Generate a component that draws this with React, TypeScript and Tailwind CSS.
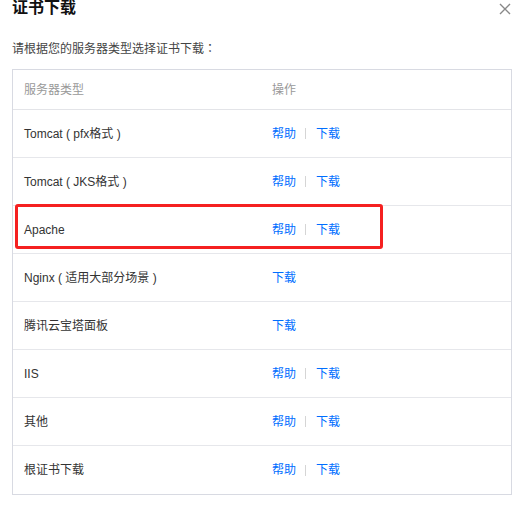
import React from "react";

const P = ({ c }: { c: string }) => (
  <span style={{ fontFamily: '"Noto Sans CJK TC", sans-serif' }}>{c}</span>
);

const rows: { name: string; help: boolean }[] = [
  { name: "Tomcat ( pfx格式 )", help: true },
  { name: "Tomcat ( JKS格式 )", help: true },
  { name: "Apache", help: true },
  { name: "Nginx ( 适用大部分场景 )", help: false },
  { name: "腾讯云宝塔面板", help: false },
  { name: "IIS", help: true },
  { name: "其他", help: true },
  { name: "根证书下载", help: true },
];

export default function App() {
  return (
    <div
      className="relative w-[522px] h-[505px] overflow-hidden bg-white text-[#333]"
      style={{ fontFamily: '"Liberation Sans", Arial, "Noto Sans CJK SC", sans-serif' }}
    >
      <div className="-mt-[1px] flex h-[18px] items-center justify-between pl-3 pr-[11px]">
        <div className="text-[16px] font-bold leading-[18px] text-[#111]">证书下载</div>
        <svg width="12" height="12" viewBox="0 0 12 12" className="mt-[1px]">
          <path d="M1 1L11 11M11 1L1 11" stroke="#888" strokeWidth="1.4" />
        </svg>
      </div>
      <div className="mt-[22px] px-3 text-[12px] leading-[18px] text-[#444]">
        请根据您的服务器类型选择证书下载<P c="：" />
      </div>
      <div className="mx-3 mt-[11px] w-[500px] border border-[#d8dae2]">
        <div className="flex h-[40px] items-center border-b border-[#e3e4e8] text-[12px] text-[#999]">
          <div className="w-[259px] pl-[11px]">服务器类型</div>
          <div>操作</div>
        </div>
        {rows.map((r, i) => (
          <div
            key={r.name}
            className={`flex h-[48px] items-center text-[12px] ${i < rows.length - 1 ? "border-b border-[#e6e7eb]" : ""}`}
          >
            <div className="w-[259px] whitespace-pre pl-[11px] text-[#333]">{r.name}</div>
            <div className="flex items-center text-[#006eff]">
              {r.help && (
                <>
                  <span>帮助</span>
                  <span className="ml-[9px] mr-[10px] h-[11px] w-px bg-[#d5d5d5]" />
                </>
              )}
              <span>下载</span>
            </div>
          </div>
        ))}
      </div>
      <div className="mx-3 mt-[10px] h-px w-[500px] bg-[#e6e7eb]" />
      <div className="absolute left-[15px] top-[204px] h-[45px] w-[368px] rounded-[3px] border-[3px] border-[#f52020]" />
    </div>
  );
}
